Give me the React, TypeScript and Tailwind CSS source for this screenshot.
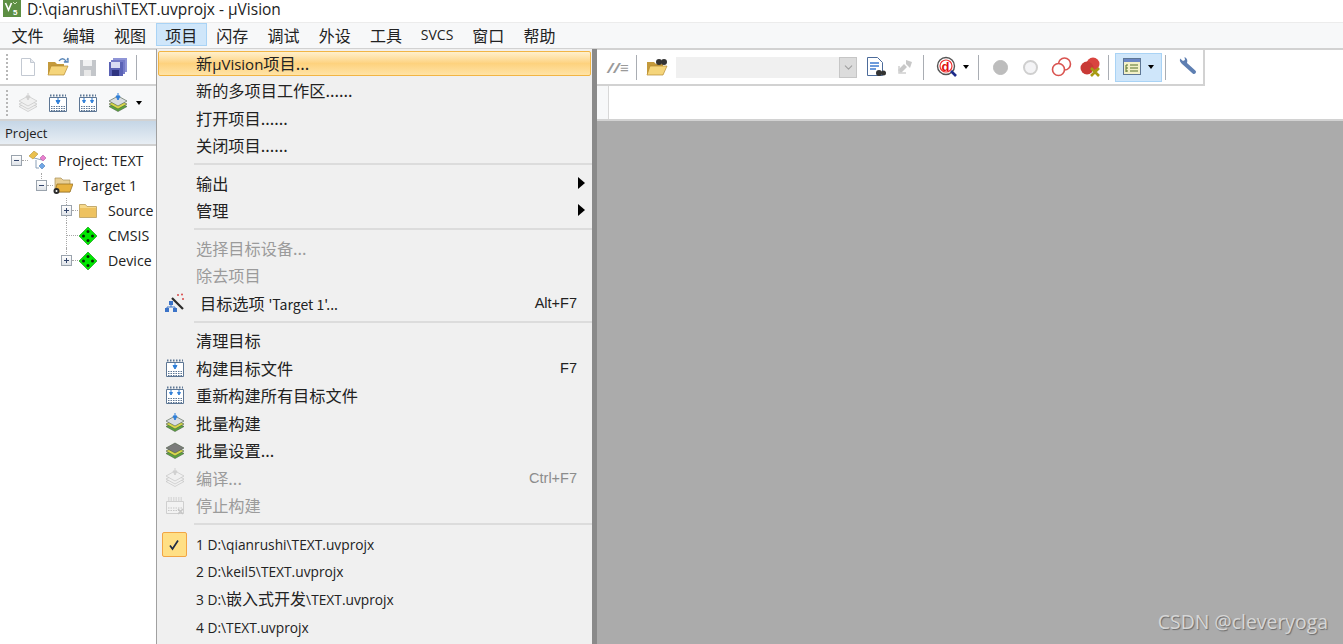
import { ChevronDown } from 'lucide-react';

const zh = "font-['Noto_Sans_CJK_SC','Liberation_Sans',sans-serif]";

function Logo() {
  return (
    <svg width="18" height="17" viewBox="0 0 18 17">
      <rect x="0" y="0" width="18" height="17" fill="#5d8f43" />
      <path d="M2.500 3l3 7 3-7" fill="none" stroke="#fff" strokeWidth="1.600" />
      <path d="M10 2l2 2M14 2l-2 2" stroke="#cfe3b8" strokeWidth="1" />
      <text x="10" y="15" fontSize="8" fontFamily="Liberation Sans" fontWeight="700" fill="#fff">5</text>
    </svg>
  );
}

function NewFile() {
  return (
    <svg width="18" height="20" viewBox="0 0 18 20">
      <path d="M2.500 1.500h9l4 4v13h-13z" fill="#fff" stroke="#c3c9d2" />
      <path d="M11.500 1.500v4h4" fill="#e6e9ee" stroke="#c3c9d2" />
    </svg>
  );
}

function OpenFolder({ small }: { small?: boolean }) {
  return (
    <svg width="22" height="20" viewBox="0 0 22 20">
      <path d="M1 5h7l2 2h7v10H1z" fill="#c49a3c" />
      <path d="M4 9h17l-4 9H1z" fill="#f5d57b" stroke="#b68a2e" strokeWidth="0.7" />
      {small ? (
        <g fill="#333">
          <circle cx="13" cy="5" r="3" />
          <circle cx="18" cy="5" r="3" />
        </g>
      ) : (
        <path d="M12 4c2-3 5-3 7 0l-2 1h4v-4l-1 2" fill="none" stroke="#5b87b8" strokeWidth="1.300" />
      )}
    </svg>
  );
}

function Floppy({ blue }: { blue?: boolean }) {
  const main = blue ? '#5a62b5' : '#c3c6ca';
  return (
    <svg width="20" height="20" viewBox="0 0 20 20">
      {blue && <rect x="5" y="1" width="14" height="14" fill="#8f95d6" />}
      {blue && <rect x="3" y="3" width="14" height="14" fill="#747ac8" />}
      <rect x={blue ? 1 : 2} y={blue ? 5 : 3} width={blue ? 14 : 16} height={blue ? 14 : 16} fill={main} />
      <rect x={blue ? 3 : 5} y={blue ? 5 : 3} width="9" height="6" fill={blue ? '#d9dcf3' : '#f0f1f2'} />
      <rect x={blue ? 4 : 6} y="13" width="7" height="6" fill={blue ? '#2e3480' : '#e8e8e8'} />
    </svg>
  );
}

function BuildOne({ double, muted }: { double?: boolean; muted?: boolean }) {
  const frame = muted ? '#c9c9c9' : '#5d7694';
  const arrow = muted ? '#cfcfcf' : '#2f7fd8';
  return (
    <svg width="20" height="20" viewBox="0 0 20 20">
      <path d="M1.500 4.500h17v14h-17z" fill={muted ? '#f2f2f2' : '#fff'} stroke={frame} />
      <path d="M2 2.500h16" stroke={frame} strokeWidth="2" strokeDasharray="1.500 1.500" />
      <path d="M3 13.500h14M3 15.500h14M3 17.500h14" stroke={frame} strokeWidth="1" strokeDasharray="1.500 1" />
      {double ? (
        <path d="M6 5v3M4.500 7.500L6 10l1.500-2.500zM14 5v3M12.500 7.500L14 10l1.500-2.500z" stroke={arrow} fill={arrow} />
      ) : (
        <path d="M10 5v3M8 7.500L10 11l2-3.500z" stroke={arrow} fill={arrow} />
      )}
    </svg>
  );
}

function Stack({ muted, plain }: { muted?: boolean; plain?: boolean }) {
  const l = muted
    ? ['#f0f0f0', '#f0f0f0', '#f0f0f0']
    : ['#5aa63c', '#d7d84a', plain ? '#7b7b7b' : '#d9dde2'];
  const s = muted ? '#bdbdbd' : '#4a5a45';
  return (
    <svg width="20" height="20" viewBox="0 0 20 20">
      <path d="M10 9l9 4.500-9 5-9-5z" fill={l[0]} stroke={s} strokeWidth="0.6" />
      <path d="M10 6.500l9 4.500-9 5-9-5z" fill={l[1]} stroke={s} strokeWidth="0.6" />
      <path d="M10 3l9 5-9 5-9-5z" fill={l[2]} stroke={s} strokeWidth="0.6" />
      {!plain && <path d="M10 0v3M8 3l2 4 2-4z" stroke={muted ? '#d0d0d0' : '#2f7fd8'} fill={muted ? '#d0d0d0' : '#2f7fd8'} />}
    </svg>
  );
}

function StopBuild() {
  return (
    <svg width="20" height="20" viewBox="0 0 20 20">
      <path d="M1.500 6.500h17v12h-17z" fill="#f2f2f2" stroke="#cfcfcf" />
      <path d="M3 3h14M3 5h14M3 13h14M3 15.500h14" stroke="#c6c6c6" strokeDasharray="1.500 1" />
      <path d="M13 14l5 5M18 14l-5 5" stroke="#c6c6c6" strokeWidth="1.500" />
    </svg>
  );
}

function Wand() {
  return (
    <svg width="22" height="22" viewBox="0 0 22 22">
      <path d="M8 6l11 11" stroke="#2b2b2b" strokeWidth="2.200" />
      <circle cx="14" cy="3" r="1" fill="#d94a4a" />
      <circle cx="18" cy="2.500" r="1" fill="#d94a4a" />
      <circle cx="19" cy="7" r="1" fill="#d94a4a" />
      <rect x="5" y="9" width="4" height="4" fill="#3b73c8" />
      <rect x="1" y="16" width="4" height="4" fill="#3b73c8" />
      <rect x="9" y="16" width="4" height="4" fill="#3b73c8" />
      <path d="M7 13v2M3 16v-1h8v1" fill="none" stroke="#3b73c8" />
    </svg>
  );
}

function Diamond() {
  return (
    <svg width="18" height="18" viewBox="0 0 18 18">
      <path d="M9 0l9 9-9 9-9-9z" fill="#00e800" stroke="#0a8a0a" strokeWidth="0.6" />
      <g fill="#062a06">
        <circle cx="9" cy="4.500" r="1.500" />
        <circle cx="4.500" cy="9" r="1.500" />
        <circle cx="13.500" cy="9" r="1.500" />
        <circle cx="9" cy="13.500" r="1.500" />
      </g>
    </svg>
  );
}

function Folder() {
  return (
    <svg width="18" height="15" viewBox="0 0 18 15">
      <path d="M0.500 1.500h6l1.500 2h9.500v11h-17z" fill="#f7d98a" stroke="#b89a58" strokeWidth="0.8" />
      <path d="M1 5h16v9H1z" fill="#eec25f" />
    </svg>
  );
}

function ProjectIcon() {
  return (
    <svg width="20" height="20" viewBox="0 0 20 20">
      <path d="M6 7l8 2M8 9v8l3 0" fill="none" stroke="#8aa0b8" />
      <path d="M6 0l4 3-5 5-4-3z" fill="#eac04e" stroke="#a98724" strokeWidth="0.5" />
      <path d="M15 4l3 3-3 3-3-3z" fill="#e97fd0" stroke="#a24d8d" strokeWidth="0.5" />
      <path d="M14 12l3 3-3 3-3-3z" fill="#6fa6e6" stroke="#3b6ea8" strokeWidth="0.5" />
    </svg>
  );
}

function TargetIcon() {
  return (
    <svg width="20" height="18" viewBox="0 0 20 18">
      <path d="M2 1h6l2 2h7v12H2z" fill="#e8cf96" stroke="#a98f58" strokeWidth="0.7" />
      <path d="M4 7h16l-3 8H2z" fill="#e8b23f" stroke="#8f6c1e" strokeWidth="0.7" />
      <circle cx="3.500" cy="14" r="3" fill="#2b2b2b" />
      <circle cx="3.500" cy="14" r="1" fill="#fff" />
    </svg>
  );
}

function Box({ plus }: { plus?: boolean }) {
  return (
    <span className="relative z-10 flex h-[11px] w-[11px] shrink-0 items-center justify-center border border-[#9aa3ad] bg-gradient-to-b from-white to-[#dfe3e8]">
      <span className="h-px w-[5px] bg-[#33456b]" />
      {plus && <span className="absolute h-[5px] w-px bg-[#33456b]" />}
    </span>
  );
}

function TreeRow({ indent, box, icon, label, stem }: {
  indent: string;
  box?: 'plus' | 'minus';
  icon: React.ReactNode;
  label: string;
  stem?: 'half' | 'full';
}) {
  return (
    <div className={`flex h-[25px] items-center ${indent}`}>
      <span className="relative flex h-full w-[11px] shrink-0 items-center">
        {stem === 'half' && <span className="absolute left-[5px] top-0 h-[12px] border-l border-dotted border-[#a8a8a8]" />}
        {stem === 'full' && <span className="absolute left-[5px] top-0 h-[25px] border-l border-dotted border-[#a8a8a8]" />}
        {box && <Box plus={box === 'plus'} />}
      </span>
      <span className={`h-0 shrink-0 border-t border-dotted border-[#a8a8a8] ${box ? 'w-[6px]' : '-ml-[5px] w-[11px]'}`} />
      <span className="flex w-[20px] shrink-0 justify-center">{icon}</span>
      <span className="ml-[10px] whitespace-nowrap text-[14.200px] text-[#222]">{label}</span>
    </div>
  );
}

function ToolSep({ className }: { className: string }) {
  return <span className={`h-[25px] w-px shrink-0 bg-[#a9adb3] ${className}`} />;
}

function Grip() {
  return <span className="mr-[5px] h-[26px] w-[2px] shrink-0 border-l-2 border-dotted border-[#b7b7b7]" />;
}

function Caret({ className }: { className: string }) {
  return <span className={`h-0 w-0 shrink-0 border-x-[3.500px] border-t-[4px] border-x-transparent border-t-black ${className}`} />;
}

function Item({ label, shortcut, icon, muted, arrow, active, wide }: {
  label: React.ReactNode;
  shortcut?: string;
  icon?: React.ReactNode;
  muted?: boolean;
  arrow?: boolean;
  active?: boolean;
  wide?: boolean;
}) {
  return (
    <div className={`relative mx-[1px] flex items-center ${active ? 'mb-[0.500px] mt-[2px] h-[25px] rounded-[2px] border border-[#f2b544] bg-gradient-to-b from-[#fff0cc] via-[#fdd27e] to-[#ffe3a6]' : 'h-[27.500px]'}`}>
      <span className="flex w-[33px] shrink-0 justify-center pl-[1px]">{icon}</span>
      <span className={`${wide ? 'ml-[9px]' : active ? 'ml-[4px]' : 'ml-[5px]'} whitespace-nowrap text-[16.200px] ${muted ? 'text-[#9b9b9b]' : 'text-[#222]'} ${zh}`}>
        {label}
      </span>
      {shortcut && (
        <span className={`absolute right-[14px] mt-[3px] font-['Liberation_Sans',sans-serif] text-[14.500px] ${muted ? 'text-[#8c8c8c]' : 'text-[#222]'}`}>
          {shortcut}
        </span>
      )}
      {arrow && <span className="absolute right-[6px] h-0 w-0 border-y-[6px] border-l-[7px] border-y-transparent border-l-black" />}
    </div>
  );
}

function Divider() {
  return <div className="my-[4px] ml-[37px] h-[2px] bg-[#dcdcdc]" />;
}

function Recent({ n, path, checked }: { n: number; path: React.ReactNode; checked?: boolean }) {
  return (
    <div className="relative flex h-[27.670px] items-center">
      <span className="flex w-[33px] shrink-0 justify-center pl-[1px]">
        {checked && (
          <span className="flex h-[25px] w-[25px] items-center justify-center rounded-[2px] border border-[#f2a544] bg-[#ffdf85]">
            <svg width="12" height="12" viewBox="0 0 12 12">
              <path d="M2 6.500l2.500 3.500L10 1.500" fill="none" stroke="#1f2a44" strokeWidth="1.700" />
            </svg>
          </span>
        )}
      </span>
      <span className="ml-[6px] whitespace-nowrap text-[13.750px] leading-[20px] text-[#222] font-['Open_Sans','Noto_Sans_CJK_SC',sans-serif]">
        {n} {path}
      </span>
    </div>
  );
}

const menus = ['文件', '编辑', '视图', '项目', '闪存', '调试', '外设', '工具', 'SVCS', '窗口', '帮助'];

export default function App() {
  return (
    <div className="relative h-[644px] w-[1343px] overflow-hidden bg-white font-['Open_Sans','Liberation_Sans',sans-serif]">
      {/* Title */}
      <div className="flex h-[23px] items-start border-b border-[#ececec] pl-[3px]">
        <Logo />
        <span className="ml-[6px] text-[15.500px] leading-[18px] text-[#222]">D:\qianrushi\TEXT.uvprojx - µVision</span>
      </div>

      {/* Menu bar */}
      <div className={`flex h-[27px] items-start border-b-2 border-[#d2d2d2] bg-[#f7f8f9] pl-[2px] text-[16px] text-[#222] ${zh}`}>
        {menus.map((m) => (
          <span
            key={m}
            className={`flex h-[23px] w-[51.200px] items-center justify-center ${m === 'SVCS' ? "font-['Open_Sans'] text-[14px]" : ''} ${m === '项目' ? 'border border-[#a9d3f5] bg-[#cfe6fa]' : ''}`}
          >
            {m}
          </span>
        ))}
      </div>

      {/* Toolbars */}
      <div className="flex h-[36px] w-[1205px] items-center border-b-2 border-r-2 border-[#d2d2d2] pl-[6px]">
        <Grip />
        <span className="flex w-[30px] justify-center"><NewFile /></span>
        <span className="flex w-[30px] justify-center"><OpenFolder /></span>
        <span className="flex w-[30px] justify-center"><Floppy /></span>
        <span className="flex w-[30px] justify-center"><Floppy blue /></span>
        <ToolSep className="ml-[3px]" />
        <span className="w-[466px] shrink-0" />
        <span className="w-[30px] whitespace-nowrap text-center text-[15px] font-bold italic text-[#9a9a9a]">//≡</span>
        <ToolSep className="ml-[3px]" />
        <span className="ml-[9px] flex w-[22px] justify-center"><OpenFolder small /></span>
        <span className="ml-[8px] flex h-[21px] w-[181px] items-center justify-end bg-[#f0f0f0]">
          <span className="flex h-[21px] w-[18px] items-center justify-center border border-[#c6c6c6] bg-[#dcdcdc]">
            <ChevronDown size={13} className="text-[#a0a0a0]" />
          </span>
        </span>
        <svg className="ml-[9px]" width="20" height="22" viewBox="0 0 20 22">
          <path d="M1.500 1.500h10l5 5v13h-15z" fill="#fff" stroke="#4d6c9b" />
          <path d="M4 7h9M4 10h9M4 13h6" stroke="#3d7bd1" strokeWidth="1.300" />
          <circle cx="13" cy="17" r="3" fill="#333" />
          <circle cx="17.500" cy="17" r="2.500" fill="#333" />
        </svg>
        <svg className="ml-[9px]" width="20" height="20" viewBox="0 0 20 20">
          <path d="M3 13l6-6 3 3-6 6zM11 3l6 2-2 6-4-4z" fill="#c8c8c8" />
          <path d="M4 9v7h7" fill="none" stroke="#d0d0d0" strokeWidth="1.500" />
        </svg>
        <ToolSep className="ml-[8px]" />
        <svg className="ml-[12px]" width="22" height="22" viewBox="0 0 22 22">
          <circle cx="10" cy="10" r="8.500" fill="#fff" stroke="#555" strokeWidth="1.400" />
          <circle cx="10" cy="10" r="6" fill="none" stroke="#e33" strokeWidth="1.200" />
          <text x="5.500" y="15" fontSize="13" fontWeight="700" fontFamily="Liberation Sans" fill="#e01010">d</text>
          <path d="M15 15l5 5" stroke="#1c2a8a" strokeWidth="2.600" />
        </svg>
        <Caret className="ml-[5px]" />
        <ToolSep className="ml-[9px]" />
        <span className="ml-[14px] h-[15px] w-[15px] shrink-0 rounded-full border border-[#bcbcbc] bg-[#bdbdbd]" />
        <span className="ml-[15px] h-[15px] w-[15px] shrink-0 rounded-full border-2 border-[#cfcfcf] bg-[#f4f4f6]" />
        <svg className="ml-[13px]" width="21" height="20" viewBox="0 0 21 20">
          <circle cx="13.500" cy="7" r="6" fill="#fff" stroke="#d9534f" strokeWidth="1.600" />
          <circle cx="7.500" cy="12.500" r="6" fill="#fff" stroke="#d9534f" strokeWidth="1.600" />
        </svg>
        <svg className="ml-[8px]" width="21" height="20" viewBox="0 0 21 20">
          <circle cx="13" cy="7" r="6.500" fill="#d9443f" />
          <circle cx="7" cy="11" r="6.500" fill="#c93a36" />
          <path d="M11 11l8 8M19 11l-8 8" stroke="#a89a12" strokeWidth="2.600" />
        </svg>
        <ToolSep className="ml-[7px]" />
        <span className="ml-[6px] flex h-[29px] w-[47px] shrink-0 items-center justify-center border border-[#a9d3f5] bg-[#cfe6fa]">
          <svg width="18" height="18" viewBox="0 0 18 18">
            <rect x="0.500" y="0.500" width="17" height="16" fill="#f3f0c8" stroke="#5d7694" />
            <rect x="1" y="1" width="16" height="3" fill="#6a86c4" />
            <path d="M3 7v7M3 7h2M3 10h2M3 13h2M7 7h8M7 10h8M7 13h8" stroke="#55702b" />
          </svg>
          <Caret className="ml-[7px]" />
        </span>
        <ToolSep className="ml-[3px]" />
        <svg className="ml-[11px]" width="20" height="20" viewBox="0 0 20 20">
          <path d="M7 6l10 9" stroke="#5e7fb2" strokeWidth="4" strokeLinecap="round" />
          <path d="M9 7A4.500 4.500 0 0 1 3 1.500l3 2.500 2-1-.5-3A5 5 0 0 1 10 6z" fill="#5e7fb2" />
        </svg>
      </div>

      <div className="h-[35px] border-b-2 border-[#d2d2d2]">
        <div className="flex h-full w-[609px] items-center border-r border-[#d8d8d8] bg-[#f7f8f9] pl-[6px]">
          <Grip />
          <span className="flex w-[30px] justify-center"><Stack muted /></span>
          <span className="flex w-[30px] justify-center"><BuildOne /></span>
          <span className="flex w-[30px] justify-center"><BuildOne double /></span>
          <span className="flex w-[30px] justify-center"><Stack /></span>
          <Caret className="ml-[3px]" />
        </div>
      </div>

      {/* Body */}
      <div className="flex h-[523px]">
        <aside className="w-[156px] shrink-0 bg-white">
          <div className="h-[25px] border-b-2 border-[#d0d0d0] bg-gradient-to-b from-[#c5d6e6] to-[#e8eef4] pl-[5px] text-[13px] leading-[24px] text-[#222]">
            Project
          </div>
          <div className="pt-[2px]">
            <TreeRow indent="pl-[11px]" box="minus" icon={<ProjectIcon />} label="Project: TEXT" />
            <TreeRow indent="pl-[36px]" box="minus" icon={<TargetIcon />} label="Target 1" stem="half" />
            <TreeRow indent="pl-[61px]" box="plus" icon={<Folder />} label="Source" stem="full" />
            <TreeRow indent="pl-[61px]" icon={<Diamond />} label="CMSIS" stem="full" />
            <TreeRow indent="pl-[61px]" box="plus" icon={<Diamond />} label="Device" stem="half" />
          </div>
        </aside>
        <main className="flex-1 bg-[#ababab]" />
      </div>

      {/* Open project menu */}
      <div className="absolute left-[156px] top-[49px] h-[595px] w-[441px] border-l border-r-[5px] border-[#a0a0a0] border-r-[#8a8a8a] bg-[#f0f0f0]">
        <Item active label={<>新<span className="font-['Open_Sans'] text-[15px]">µVision</span>项目...</>} />
        <Item label="新的多项目工作区......" />
        <Item label="打开项目......" />
        <Item label="关闭项目......" />
        <Divider />
        <Item arrow label="输出" />
        <Item arrow label="管理" />
        <Divider />
        <Item muted label="选择目标设备..." />
        <Item muted label="除去项目" />
        <Item wide icon={<Wand />} label={<>目标选项 <span className="text-[14px]">'Target 1'...</span></>} shortcut="Alt+F7" />
        <Divider />
        <Item label="清理目标" />
        <Item icon={<BuildOne />} label="构建目标文件" shortcut="F7" />
        <Item icon={<BuildOne double />} label="重新构建所有目标文件" />
        <Item icon={<Stack />} label="批量构建" />
        <Item icon={<Stack plain />} label="批量设置..." />
        <Item muted icon={<Stack muted />} label="编译..." shortcut="Ctrl+F7" />
        <Item muted icon={<StopBuild />} label="停止构建" />
        <Divider />
        <div className="pt-[2px]">
          <Recent checked n={1} path="D:\qianrushi\TEXT.uvprojx" />
          <Recent n={2} path="D:\keil5\TEXT.uvprojx" />
          <Recent n={3} path={<>D:\<span className="text-[16px] leading-none">嵌入式开发</span>\TEXT.uvprojx</>} />
          <Recent n={4} path="D:\TEXT.uvprojx" />
        </div>
      </div>

      {/* Watermark */}
      <span className="absolute bottom-[8px] right-[15px] text-[19.400px] text-[#d6d6d6] [text-shadow:1px_1px_1px_#6b6b6b]">CSDN @cleveryoga</span>
    </div>
  );
}
